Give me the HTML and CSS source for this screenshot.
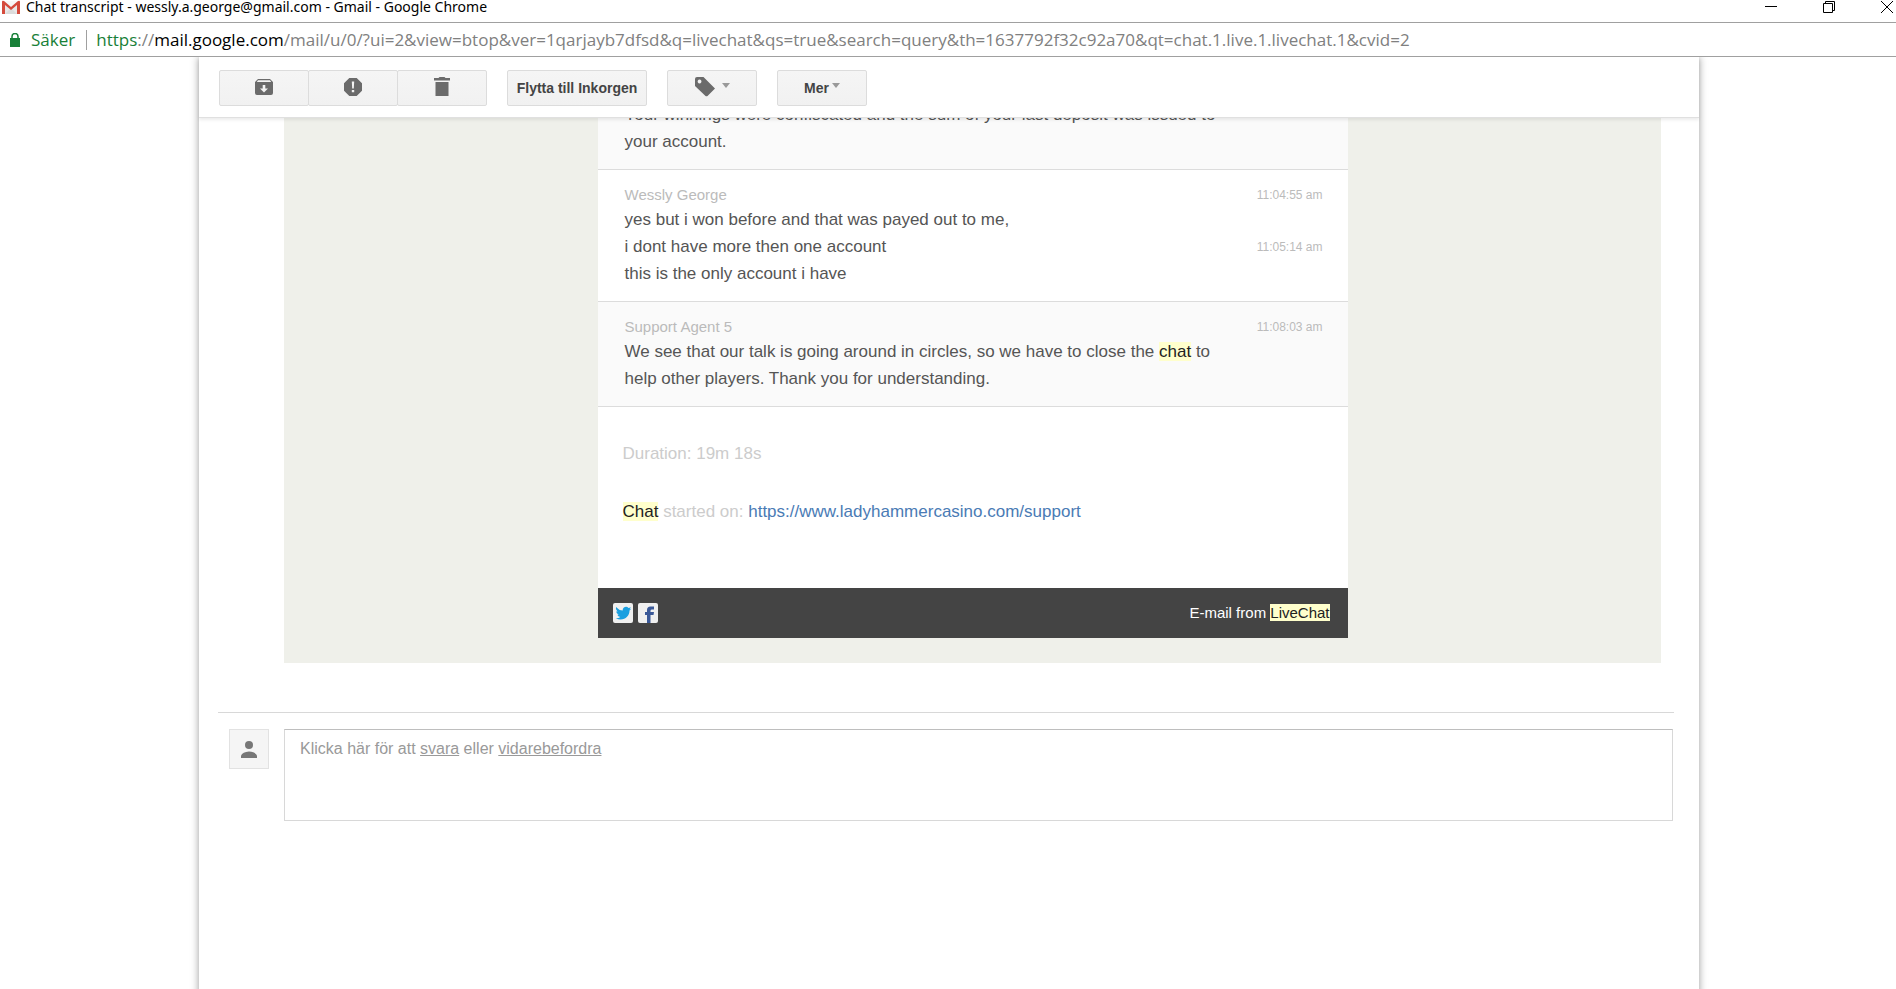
FILE: index.html
```html
<!DOCTYPE html>
<html lang="sv">
<head>
<meta charset="utf-8">
<title>Chat transcript - wessly.a.george@gmail.com - Gmail</title>
<link rel="stylesheet" href="styles.css">
</head>
<body>
<header class="titlebar">
  <svg class="gmail" viewBox="0 0 18 14" aria-hidden="true"><path d="M1 1h16v13H1z" fill="#e9e9e9"/><path d="M3 14l6-6 6 6z" fill="#dcdcdc"/><path d="M2 1h14L9 7z" fill="#f7f7f7"/><path d="M0 14V2q0-2 2-1l7 6 7-6q2-1 2 1v12h-3V5L9 10 3 5v9z" fill="#d54b3d"/></svg>
  <h1 class="title">Chat transcript - wessly.a.george@gmail.com - Gmail - Google Chrome</h1>
  <div class="window-controls">
    <button aria-label="Minimera"><svg viewBox="0 0 12 12"><path d="M0 5.5h12"/></svg></button>
    <button aria-label="Återställ"><svg viewBox="0 0 12 12"><path d="M.5 2.5h9v9h-9zM2.500 2.500v-2h9v9h-2"/></svg></button>
    <button aria-label="Stäng"><svg viewBox="0 0 12 12"><path d="M0 0l12 12M12 0L0 12"/></svg></button>
  </div>
</header>
<div class="addressbar">
  <svg class="lock" viewBox="0 0 10 14" aria-hidden="true"><path d="M0 5h10v9H0z" fill="#188038"/><path d="M2 6V3.500a3 3 0 0 1 6 0V6" fill="none" stroke="#188038" stroke-width="1.500"/></svg>
  <span class="secure">Säker</span>
  <span class="url"><span class="scheme">https</span>://<span class="host">mail.google.com</span>/mail/u/0/?ui=2&amp;view=btop&amp;ver=1qarjayb7dfsd&amp;q=livechat&amp;qs=true&amp;search=query&amp;th=1637792f32c92a70&amp;qt=chat.1.live.1.livechat.1&amp;cvid=2</span>
</div>
<main class="page">
  <nav class="toolbar">
    <div class="group">
      <button class="btn" aria-label="Arkivera"><svg width="18" height="16" viewBox="0 0 18 16"><path fill="#6b6b6b" fill-rule="evenodd" d="M3 0h12l3 3v11q0 2-2 2H2q-2 0-2-2V3zM3 1.200L1.800 3h14.400L15 1.200zM7.700 6v3.500H5L9 13.500l4-4h-2.700V6z"/></svg></button>
      <button class="btn" aria-label="Rapportera skräppost"><svg width="18" height="18" viewBox="0 0 18 18"><path fill="#6b6b6b" fill-rule="evenodd" d="M5.300 0h7.400L18 5.300v7.400L12.700 18H5.300L0 12.700V5.300zM7.800 3.500l.4 7h1.600l.4-7zM7.800 12v2.300h2.400V12z"/></svg></button>
      <button class="btn" aria-label="Ta bort"><svg width="16" height="19" viewBox="0 0 16 19"><path fill="#6b6b6b" d="M0 1h4.500l1-1h5l1 1H16v2.500H0zM1.500 5h13v14h-13z"/></svg></button>
    </div>
    <button class="btn wide">Flytta till Inkorgen</button>
    <button class="btn" aria-label="Etiketter"><svg width="20" height="20" viewBox="0 0 20 20"><path fill="#6b6b6b" fill-rule="evenodd" d="M0 2q0-2 2-2h6.500L20 11.500l-7.500 7.500q-1 .5-2 0L0 9zM4.500 2.600a1.900 1.900 0 1 0 .1 0z"/></svg><span class="caret"></span></button>
    <button class="btn more">Mer<span class="caret"></span></button>
  </nav>
  <div class="viewport">
    <div class="mail">
      <article class="card">
        <section class="message agent">
          <p class="text">Your winnings were confiscated and the sum of your last deposit was issued to your account.</p>
        </section>
        <section class="message">
          <span class="name">Wessly George</span><time>11:04:55 am</time>
          <p class="text">yes but i won before and that was payed out to me,</p>
          <p class="text">i dont have more then one account</p><time>11:05:14 am</time>
          <p class="text">this is the only account i have</p>
        </section>
        <section class="message agent">
          <span class="name">Support Agent 5</span><time>11:08:03 am</time>
          <p class="text">We see that our talk is going around in circles, so we have to close the <mark>chat</mark> to help other players. Thank you for understanding.</p>
        </section>
        <section class="summary">
          <p>Duration: 19m 18s</p>
          <p><mark>Chat</mark> started on: <a href="#">https://www.ladyhammercasino.com/support</a></p>
        </section>
        <footer class="card-footer">
          <a class="social" href="#" aria-label="Twitter"><svg viewBox="0 0 20 20"><rect width="20" height="20" rx="2" fill="#f0f0f0"/><path fill="#1a9fe0" d="M3 4q3 3.500 6.700 3.600C9.300 4.500 13.500 2.500 15.500 5q1 0 2.300-.8-.4 1.300-1.400 2 1 0 1.800-.5-.7 1.200-1.700 1.900C16.700 14 10 19 2.700 15.300q2.700.2 4.600-1.300-2.300-.2-3-2.200h1.400Q3.200 11 3.200 8.300l1.300.4Q2.100 6.600 3 4z"/></svg></a>
          <a class="social" href="#" aria-label="Facebook"><svg viewBox="0 0 20 20"><rect width="20" height="20" rx="2" fill="#f0f0f0"/><path fill="#3b5998" d="M9 20v-8H7V9h2V7q0-3.500 3.500-3.500H16v3h-2q-1.500 0-1.500 1.300V9H16l-.5 3h-3v8z"/></svg></a>
          <span class="credit">E-mail from <mark>LiveChat</mark></span>
        </footer>
      </article>
    </div>
    <section class="reply">
      <div class="avatar"><svg width="16" height="17" viewBox="0 0 16 17" aria-hidden="true"><circle cx="8" cy="4" r="4" fill="#777"/><path fill="#777" d="M0 17v-2.500Q1.500 11 8 10.500q6.500.5 8 4V17z"/></svg></div>
      <div class="reply-box">Klicka här för att <a href="#">svara</a> eller <a href="#">vidarebefordra</a></div>
    </section>
  </div>
</main>
</body>
</html>
```
FILE: styles.css
```css
* { box-sizing: border-box; }
html, body { height: 100%; }
body {
  margin: 0;
  display: flex;
  flex-direction: column;
  overflow: hidden;
  background: #fff;
  font-family: "Liberation Sans", Arial, sans-serif;
}
p, h1 { margin: 0; }
button { font: inherit; padding: 0; cursor: pointer; }
mark { background: #ffc; color: #222; }

/* Window chrome */
.titlebar, .addressbar {
  display: flex;
  align-items: center;
  flex: none;
  border-bottom: 1px solid #a0a0a0;
  font-family: "Open Sans", "Noto Sans", sans-serif;
  white-space: nowrap;
}
.titlebar { height: 23px; padding: 0 0 8px 2px; }
.gmail { width: 18px; height: 14px; flex: none; }
.title {
  margin-left: 6px;
  font-family: "Noto Sans", sans-serif;
  font-size: 14px;
  font-weight: 400;
  line-height: 16px;
  color: #000;
}
.window-controls { display: flex; gap: 46px; margin-left: auto; padding-right: 3px; }
.window-controls button { width: 12px; height: 12px; border: 0; background: none; }
.window-controls svg { display: block; width: 12px; height: 12px; fill: none; stroke: #000; }
.addressbar {
  position: relative;
  z-index: 2;
  height: 34px;
  padding-left: 10px;
  background: #fff;
  font-size: 17px;
  line-height: 20px;
  color: #808080;
}
.lock { width: 10px; height: 14px; flex: none; }
.secure { margin-left: 11px; padding-right: 11px; border-right: 1px solid #a0a0a0; color: #188038; }
.url { margin-left: 9px; }
.scheme { color: #188038; }
.host { color: #000; }

/* Mail window */
.page {
  flex: 1;
  min-height: 0;
  display: flex;
  flex-direction: column;
  margin: 0 197px -12px 199px;
  box-shadow: 0 0 8px rgba(0, 0, 0, .4);
}
.toolbar {
  flex: none;
  display: flex;
  gap: 20px;
  padding: 13px 20px 11px;
  border-bottom: 1px solid #e0e0e0;
  box-shadow: 0 2px 3px rgba(0, 0, 0, .08);
  position: relative;
  background: #fff;
}
.group { display: flex; }
.btn {
  display: flex;
  align-items: center;
  justify-content: center;
  width: 90px;
  height: 36px;
  border: 1px solid #dcdcdc;
  border-radius: 2px;
  background: linear-gradient(#f5f5f5, #f1f1f1);
  color: #444;
  font-size: 14px;
  font-weight: bold;
  line-height: 16px;
}
.group .btn + .btn { margin-left: -1px; }
.btn.wide { width: 140px; }
.btn svg { margin-bottom: 3px; }
.group .btn svg { margin-right: 1px; }
.caret {
  margin: 0 0 5px 7px;
  border: 4px solid transparent;
  border-top: 5px solid #999;
  border-bottom: 0;
}
.more .caret { margin-left: 3px; }

.viewport { flex: 1; min-height: 0; overflow: hidden; }
.mail {
  margin: 0 38px 0 85px;
  padding: 0 25px 25px;
  background: #eff0ea;
}
.card { width: 750px; max-width: 100%; margin: 0 auto; background: #fff; }
.message {
  display: grid;
  grid-template-columns: minmax(0, 612px) 1fr;
  padding: 14px 25px 14px 27px;
  border-bottom: 1px solid #dcdcdc;
}
.message:first-child { margin-top: -31px; }
.agent { background: #fafafa; }
.name { font-size: 15px; line-height: 22px; color: #bbb; }
.text { grid-column: 1; font-size: 17px; line-height: 27px; color: #555; }
time { align-self: center; text-align: right; font-size: 12px; color: #bbb; }
.summary {
  display: flex;
  flex-direction: column;
  gap: 31px;
  padding: 33px 25px 63px;
  font-size: 17px;
  line-height: 27px;
  color: #ccc;
}
.summary a { color: #4a7bb5; text-decoration: none; }
.card-footer {
  display: flex;
  align-items: center;
  gap: 5px;
  height: 50px;
  padding: 0 18px 0 15px;
  background: #444;
  color: #fff;
  font-size: 15px;
}
.social svg { display: block; width: 20px; height: 20px; }
.credit { margin-left: auto; padding-bottom: 2px; }

.reply {
  display: flex;
  align-items: flex-start;
  gap: 15px;
  margin: 49px 25px 0 19px;
  padding: 16px 1px 0 11px;
  border-top: 1px solid #d8d8d8;
}
.avatar {
  flex: none;
  display: grid;
  place-items: center;
  width: 40px;
  height: 40px;
  border: 1px solid #e2e2e2;
  background: #f5f5f5;
}
.reply-box {
  flex: 1;
  min-height: 92px;
  padding: 9px 15px;
  border: 1px solid #d8d8d8;
  border-top-color: #bebebe;
  color: #999;
  font-size: 16px;
  line-height: 20px;
}
.reply-box a { color: inherit; }
```
